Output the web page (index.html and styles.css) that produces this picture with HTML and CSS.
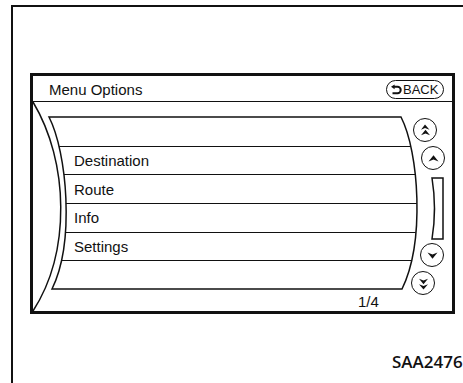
FILE: index.html
```html
<!DOCTYPE html>
<html lang="en">
<head>
  <meta charset="UTF-8">
  <meta name="viewport" content="width=device-width, initial-scale=1.0">
  <title>Menu Options</title>
  <link rel="stylesheet" href="styles.css">
</head>
<body>
  <div class="frame">
    <div class="screen">
      <div class="screen-head">
        <span class="screen-title">Menu Options</span>
        <button class="back-btn">
          <svg width="11" height="10" viewBox="0 0 11 10">
            <path class="back-arrow" d="M2.5,1.8 H6.5 A3,3 0 0 1 6.5,8.2 H1.5" />
            <path class="back-head" d="M0,1.8 L3.6,-0.6 L3.6,4.2 Z" />
          </svg>
          BACK
        </button>
      </div>
      <div class="screen-body">
        <!-- curved outlines of the display -->
        <svg class="decor" width="419" height="209" viewBox="0 0 419 209">
          <path d="M0,0 C36,60 38,150 0,209" />
          <path d="M16,15 H368 C386,50 392,140 369,187 H19 C42,140 34,50 16,15 Z" />
        </svg>
        <div class="main">
          <ul class="menu-list">
            <li></li>
            <li>Destination</li>
            <li>Route</li>
            <li>Info</li>
            <li>Settings</li>
            <li></li>
          </ul>
          <div class="page-count">1/4</div>
        </div>
        <div class="scroll">
          <button class="scroll-btn first">
            <svg width="15" height="15" viewBox="-7.5 -7.5 15 15"><path d="M-0.5,-6 L4,-0.8 L-0.5,-2.4 L-4.5,-0.8 Z M0,-0.8 L4.5,4.8 L0,3 L-4.5,4.8 Z" /></svg>
          </button>
          <button class="scroll-btn prev">
            <svg width="15" height="15" viewBox="-7.5 -7.5 15 15"><path d="M0,-3.2 L5,3 L0,1 L-5,3 Z" /></svg>
          </button>
          <svg class="scroll-bar" width="13" height="63" viewBox="0 0 13 63">
            <path d="M1,1 H12 V62 H1 Q6,31.5 1,1 Z" />
          </svg>
          <button class="scroll-btn next">
            <svg width="15" height="15" viewBox="-7.5 -7.5 15 15"><path d="M0,3.2 L5,-3 L0,-1 L-5,-3 Z" /></svg>
          </button>
          <button class="scroll-btn last">
            <svg width="15" height="15" viewBox="-7.5 -7.5 15 15"><path d="M0,6 L4.5,0.8 L0,2.4 L-4.5,0.8 Z M0,0.8 L4.5,-4.8 L0,-3 L-4.5,-4.8 Z" /></svg>
          </button>
        </div>
      </div>
    </div>
    <div class="fig-code">SAA2476</div>
  </div>
</body>
</html>
```

FILE: styles.css
```css
body {
  margin: 0;
  background-color: #fff;
  overflow: hidden;
  font-family: "Liberation Sans", Arial, sans-serif;
  color: #111;
}
.frame {
  margin: 5px 0 0 11px;
  height: 376px;
  border-top: 2px solid #111;
  border-left: 2px solid #111;
}
.screen {
  margin: 66px 0 0 17px;
  width: 425px;
  height: 241px;
  box-sizing: border-box;
  border: 3px solid #111;
  display: flex;
  flex-direction: column;
}
.screen-head {
  height: 26px;
  box-sizing: border-box;
  border-bottom: 1px solid #111;
  padding: 2px 8px 0 16px;
  display: flex;
  align-items: center;
  justify-content: space-between;
}
.screen-title {
  font-size: 15px;
}
.back-btn {
  display: flex;
  align-items: center;
  gap: 1px;
  width: 58px;
  height: 19px;
  box-sizing: border-box;
  padding: 0 0 0 4px;
  border: 1.5px solid #111;
  border-radius: 10px;
  background-color: #fff;
  font-family: "Liberation Sans", Arial, sans-serif;
  font-size: 13px;
  color: #111;
}
.back-btn svg {
  overflow: visible;
}
.back-arrow {
  fill: none;
  stroke: #111;
  stroke-width: 2;
}
.back-head {
  fill: #111;
}
.screen-body {
  position: relative;
  flex: 1;
  display: flex;
}
.decor {
  position: absolute;
  left: 0;
  top: 0;
  pointer-events: none;
  overflow: visible;
}
.decor path {
  fill: none;
  stroke: #111;
  stroke-width: 1.5;
}
.main {
  flex: none;
  width: 386px;
}
.menu-list {
  list-style: none;
  margin: 15px 0 0;
  padding: 0;
  height: 172px;
  display: grid;
  grid-template-rows: repeat(6, 1fr);
  clip-path: path("M16,0 H368 C386,35 392,125 369,172 H19 C42,125 34,35 16,0 Z");
}
.menu-list li {
  display: flex;
  align-items: center;
  padding-left: 41px;
  border-top: 1px solid #111;
  font-size: 15px;
}
.menu-list li:first-child {
  border-top: none;
}
.page-count {
  margin-top: 4px;
  padding-left: 325px;
  font-size: 15px;
  line-height: 17px;
}
.scroll {
  margin-left: -8px;
  width: 41px;
  padding-top: 16px;
  display: flex;
  flex-direction: column;
  align-items: flex-start;
}
.scroll-btn {
  width: 24px;
  height: 24px;
  box-sizing: border-box;
  padding: 0;
  border: 1.5px solid #111;
  border-radius: 50%;
  background-color: #fff;
  display: flex;
  align-items: center;
  justify-content: center;
}
.scroll-btn path {
  fill: #111;
}
.scroll-btn.first {
  margin-left: 2px;
}
.scroll-btn.prev {
  margin: 4px 0 0 10px;
}
.scroll-bar {
  margin: 7px 0 0 20px;
}
.scroll-bar path {
  fill: none;
  stroke: #111;
  stroke-width: 1.5;
}
.scroll-btn.next {
  margin: 3px 0 0 9px;
}
.scroll-btn.last {
  margin: 4px 0 0 0;
}
.fig-code {
  margin-top: 36px;
  padding-left: 379px;
  font-family: "Open Sans", sans-serif;
  font-size: 17px;
  font-weight: 600;
  white-space: nowrap;
}
```
